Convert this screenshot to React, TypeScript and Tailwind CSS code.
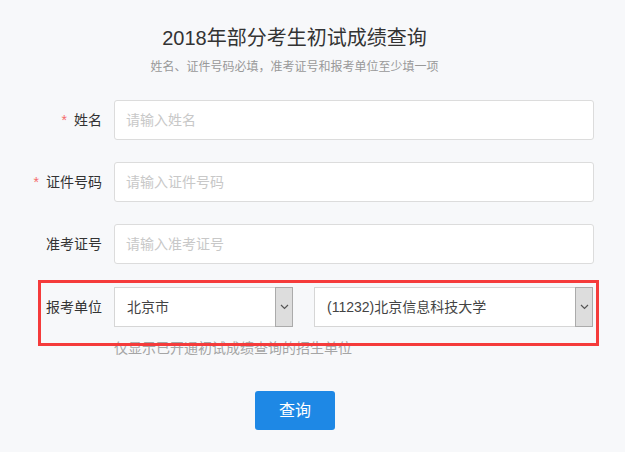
const font = { fontFamily: '"Liberation Sans", "Noto Sans CJK SC", sans-serif' };

function Chevron() {
  return (
    <svg width="9" height="6" viewBox="0 0 9 6" fill="none">
      <polyline points="1,1 4.5,4.5 8,1" stroke="#555" strokeWidth="1.2" />
    </svg>
  );
}

function Row({ label, required, placeholder }: { label: string; required?: boolean; placeholder: string }) {
  return (
    <div className="flex items-center h-[40px]">
      <div className="w-[102px] text-right text-[14px] text-[#333]">
        {required && <span className="text-[#f56c6c] mr-[7px]">*</span>}
        {label}
      </div>
      <div className="ml-[12px] w-[480px] h-[40px] bg-white border border-[#dcdcdc] rounded-[3px] flex items-center px-[11px] text-[14px] text-[#c8c8c8]">
        {placeholder}
      </div>
    </div>
  );
}

function Select({ value, width }: { value: string; width: string }) {
  return (
    <div className={`${width} h-[40px] bg-white border border-[#d6d6d6] flex items-stretch`}>
      <div className="flex-1 flex items-center px-[12px] text-[14px] text-[#444]">{value}</div>
      <div className="w-[18px] my-[-1px] mr-[-1px] bg-[#dddddd] border border-[#ababab] flex items-center justify-center">
        <Chevron />
      </div>
    </div>
  );
}

export default function App() {
  return (
    <div className="relative w-[625px] min-h-[452px] bg-[#f7f8fa] overflow-hidden" style={font}>
      <div className="w-[589px] pt-[24px] text-center">
        <h1 className="text-[20px] leading-[28px] text-[#333]">2018年部分考生初试成绩查询</h1>
        <p className="mt-[7px] text-[12px] leading-[16px] text-[#999]">
          姓名、证件号码必填，准考证号和报考单位至少填一项
        </p>
      </div>

      <div className="mt-[25px] flex flex-col gap-[22px]">
        <Row label="姓名" required placeholder="请输入姓名" />
        <Row label="证件号码" required placeholder="请输入证件号码" />
        <Row label="准考证号" placeholder="请输入准考证号" />
      </div>

      <div className="mt-[23px] flex items-center h-[40px]">
        <div className="w-[102px] text-right text-[14px] text-[#333]">报考单位</div>
        <div className="ml-[12px] flex gap-[21px]">
          <Select value="北京市" width="w-[179px]" />
          <Select value="(11232)北京信息科技大学" width="w-[279px]" />
        </div>
      </div>
      <p className="ml-[114px] mt-[11px] text-[14px] leading-[20px] text-[#a5a5a5]">
        仅显示已开通初试成绩查询的招生单位
      </p>

      <div className="mt-[33px] ml-[255px]">
        <button className="w-[80px] h-[39px] rounded-[3px] bg-[#1e88e5] text-white text-[16px]">查询</button>
      </div>

      <div className="absolute left-[38px] top-[280px] w-[561px] h-[66px] border-[3px] border-[#f53b3b] pointer-events-none" />
    </div>
  );
}
